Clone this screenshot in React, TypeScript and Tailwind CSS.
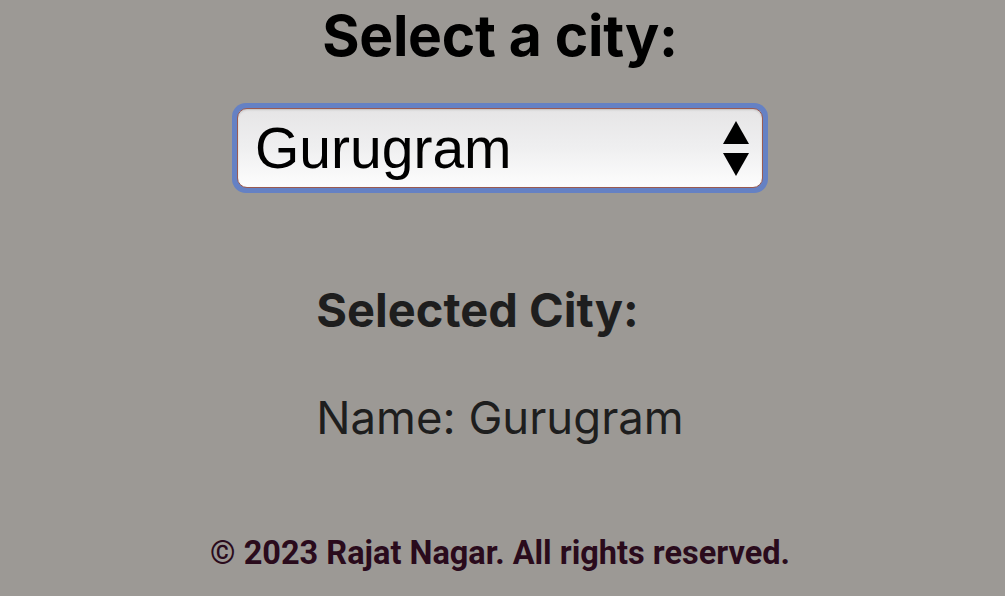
import { useState } from 'react';

const cities = ['Gurugram', 'Delhi', 'Noida', 'Faridabad'];

export default function App() {
  const [city] = useState('Gurugram');

  return (
    <div className="min-h-[596px] bg-[#9c9995] flex flex-col items-center pr-[5px] font-['Inter',sans-serif]">
      <h1 className="text-[57px] leading-[72px] font-bold text-black tracking-[-0.3px]">
        Select a city:
      </h1>

      <div className="mt-[31px] w-[536px] h-[90px] rounded-[14px] bg-[#6581c4] p-[5px]">
        <div className="h-full rounded-[10px] border border-[#9a5a50] bg-gradient-to-b from-[#e6e5e6] via-[#efeff0] to-[#fdfdfd] shadow-[inset_0_1px_2px_rgba(0,0,0,0.15)] flex items-center justify-between pl-[17px] pr-[12px]">
          <span className="font-['Liberation_Sans',Arial,sans-serif] text-[57px] leading-none text-black">
            {cities.find((c) => c === city)}
          </span>
          <svg width="28" height="56" viewBox="0 0 28 56" className="mt-[2px]">
            <polygon points="14,0 27,23 1,23" fill="#000" />
            <polygon points="1,32 27,32 14,55" fill="#000" />
          </svg>
        </div>
      </div>

      <div className="mt-[92px] text-[#1e1e1e]">
        <h2 className="text-[47px] leading-[50px] font-bold">Selected City:</h2>
        <p className="mt-[58px] text-[45.5px] leading-[50px]">Name: {city}</p>
      </div>

      <footer className="mt-[92px] font-['Roboto',sans-serif] font-bold text-[32.5px] leading-[36px] text-[#2a0b1c]">
        © 2023 Rajat Nagar. All rights reserved.
      </footer>
    </div>
  );
}
